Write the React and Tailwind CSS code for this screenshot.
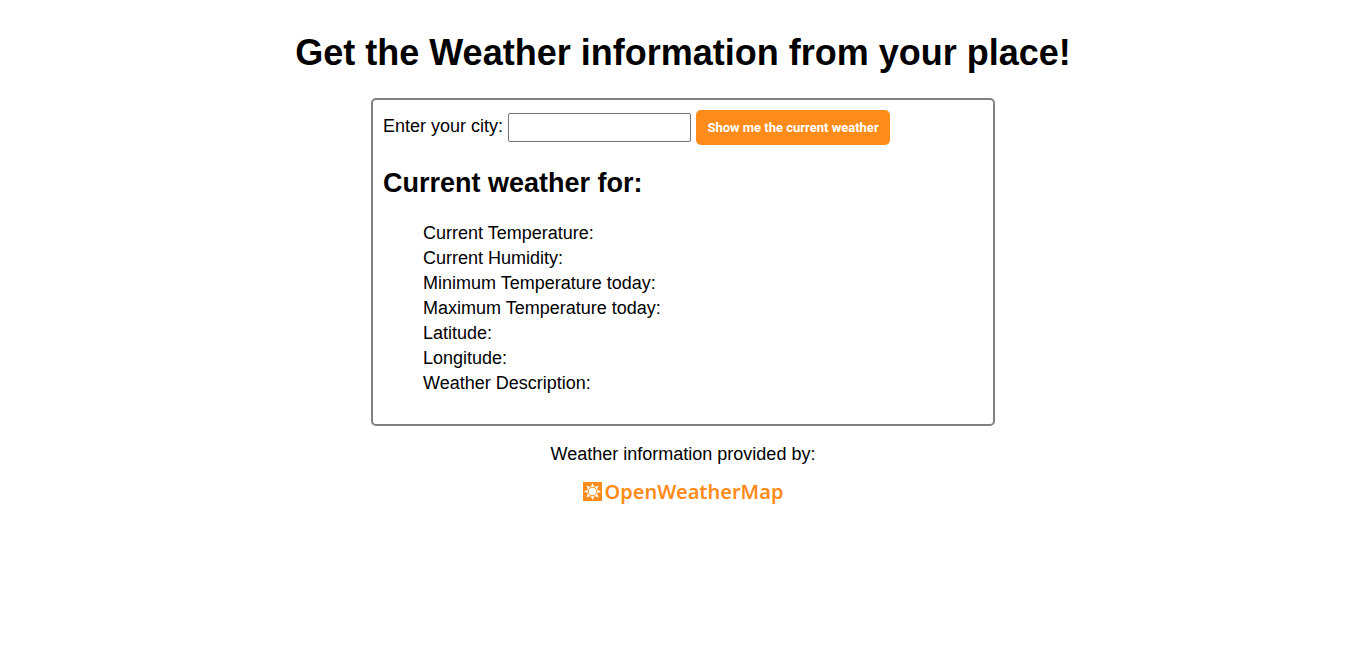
import { useState } from "react";

const FIELDS = [
  "Current Temperature:",
  "Current Humidity:",
  "Minimum Temperature today:",
  "Maximum Temperature today:",
  "Latitude:",
  "Longitude:",
  "Weather Description:",
];

function SunIcon() {
  const rays = [0, 45, 90, 135, 180, 225, 270, 315];
  return (
    <svg viewBox="0 0 38 38" className="size-[19px]" aria-hidden="true">
      <rect width="38" height="38" fill="#ff8c1a" />
      <circle cx="19" cy="19" r="7.5" fill="#fff" />
      {rays.map((angle) => (
        <path key={angle} d="M15 10.5 L19 2 L23 10.5 Q19 8.5 15 10.5 Z" fill="#fff" transform={`rotate(${angle} 19 19)`} />
      ))}
    </svg>
  );
}

export default function App() {
  const [city, setCity] = useState("");

  return (
    <div className="px-2 pt-8 font-['Liberation_Sans',Arial,sans-serif] text-[18px] leading-[25px] text-black">
      <h1 className="text-center text-[36px] leading-[42px] font-bold">
        Get the Weather information from your place!
      </h1>
      <main className="mx-auto mt-6 w-full max-w-[624px] rounded-[5px] border-2 border-[#808080] px-2.5 pt-2.5 pb-7">
        <form className="flex flex-wrap items-center gap-[5px]" onSubmit={(e) => e.preventDefault()}>
          <label htmlFor="city" className="pb-0.5">Enter your city:</label>
          <input
            id="city"
            type="text"
            value={city}
            onChange={(e) => setCity(e.target.value)}
            className="h-[29px] w-[183px] rounded-[2px] border border-[#767676] bg-white px-1"
          />
          <button
            type="submit"
            className="h-[35px] min-w-[194px] cursor-pointer rounded-[5px] bg-[#ff8c1a] px-2.5 font-[Roboto,sans-serif] text-[13px] leading-4 font-bold text-white"
          >
            Show me the current weather
          </button>
        </form>
        <h2 className="mt-[22px] text-[27px] leading-8 font-bold">Current weather for:</h2>
        <ul className="mt-[22px] pl-10">
          {FIELDS.map((label) => (
            <li key={label}>{label}</li>
          ))}
        </ul>
      </main>
      <footer className="mt-4 text-center">
        <p>Weather information provided by:</p>
        <a
          href="https://openweathermap.org"
          className="mt-3 inline-flex items-center gap-[3px] font-['Noto_Sans',sans-serif] text-[20px] leading-[25px] font-semibold text-[#ff8c1a]"
        >
          <SunIcon />
          <span>OpenWeatherMap</span>
        </a>
      </footer>
    </div>
  );
}
